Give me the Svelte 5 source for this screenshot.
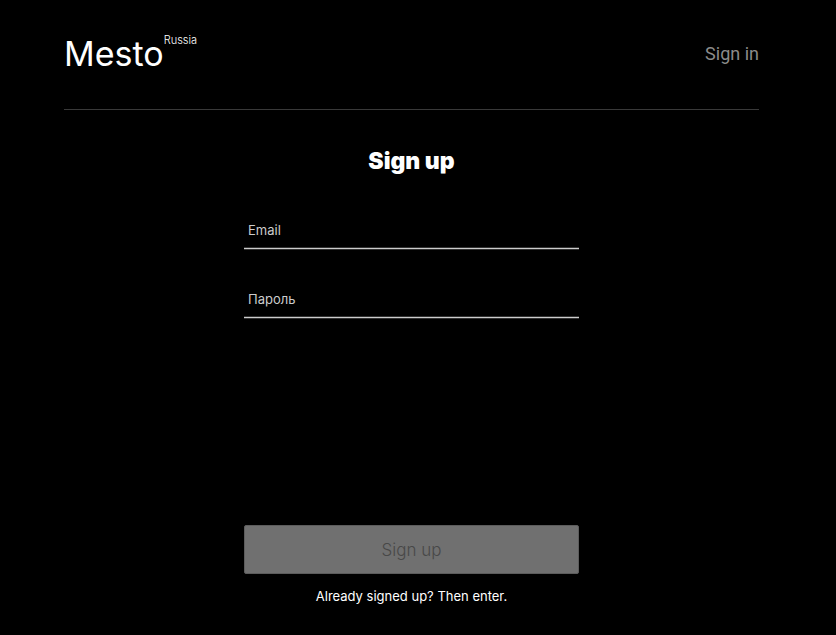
<script>
  let email = $state('');
  let password = $state('');
  let ready = $derived(email.length > 0 && password.length > 0);
</script>

<div class="page">
  <header>
    <a class="logo" href="#home">Mesto<sup>Russia</sup></a>
    <nav><a class="nav-link" href="#signin">Sign in</a></nav>
  </header>

  <main>
    <form onsubmit={(e) => e.preventDefault()}>
      <h1>Sign up</h1>
      <input type="email" aria-label="Email" placeholder="Email" bind:value={email} />
      <input type="password" aria-label="Пароль" placeholder="Пароль" bind:value={password} />
      <button type="submit" disabled={!ready}>Sign up</button>
    </form>
    <p>Already signed up? <a href="#signin">Then enter.</a></p>
  </main>
</div>

<style>
  :global(body) {
    margin: 0;
    background: #000;
  }
  .page {
    box-sizing: border-box;
    min-height: 100vh;
    padding: 0 77px 0 64px;
    background: #000;
    color: #fff;
    font-family: Inter, "Liberation Sans", sans-serif;
  }
  a {
    color: inherit;
    text-decoration: none;
  }
  header {
    display: flex;
    justify-content: space-between;
    align-items: center;
    padding: 34px 0 35px;
    border-bottom: 1px solid #393939;
  }
  .logo {
    display: flex;
    align-items: flex-start;
    font-size: 34px;
    line-height: 40px;
  }
  .logo sup {
    font-size: 11px;
    font-weight: 300;
    line-height: 12px;
  }
  .nav-link {
    color: #8b8b8b;
    font: 18px/22px Roboto, "Liberation Sans", sans-serif;
  }
  main {
    display: flex;
    flex-direction: column;
    align-items: center;
  }
  form {
    display: flex;
    flex-direction: column;
    width: 100%;
    max-width: 335px;
  }
  h1 {
    margin: 37px 0 35px;
    font-size: 23px;
    font-weight: 900;
    line-height: 29px;
    text-align: center;
  }
  input {
    box-sizing: border-box;
    width: 100%;
    height: 39px;
    margin: 0 0 30px;
    padding: 0 4px 1px;
    border: 0;
    border-radius: 0;
    outline: 0;
    background: linear-gradient(#333 1px, #ccc 1px, #ccc 2px, #333 2px) bottom / 100% 3px no-repeat;
    color: #fff;
    font: 13px/16px Inter, "Liberation Sans", sans-serif;
  }
  input::placeholder {
    color: #ccc;
    opacity: 1;
  }
  button {
    height: 49px;
    margin: 176px 0 0;
    padding: 1px 0 0;
    border: 1px solid #5c5c5c;
    border-radius: 2px;
    background: #fff;
    color: #000;
    font: 300 17px/22px Inter, "Liberation Sans", sans-serif;
  }
  button:disabled {
    background: #707070;
    color: #484848;
  }
  p {
    margin: 14px 0 0;
    font-size: 13px;
    line-height: 17px;
    text-align: center;
  }
</style>
